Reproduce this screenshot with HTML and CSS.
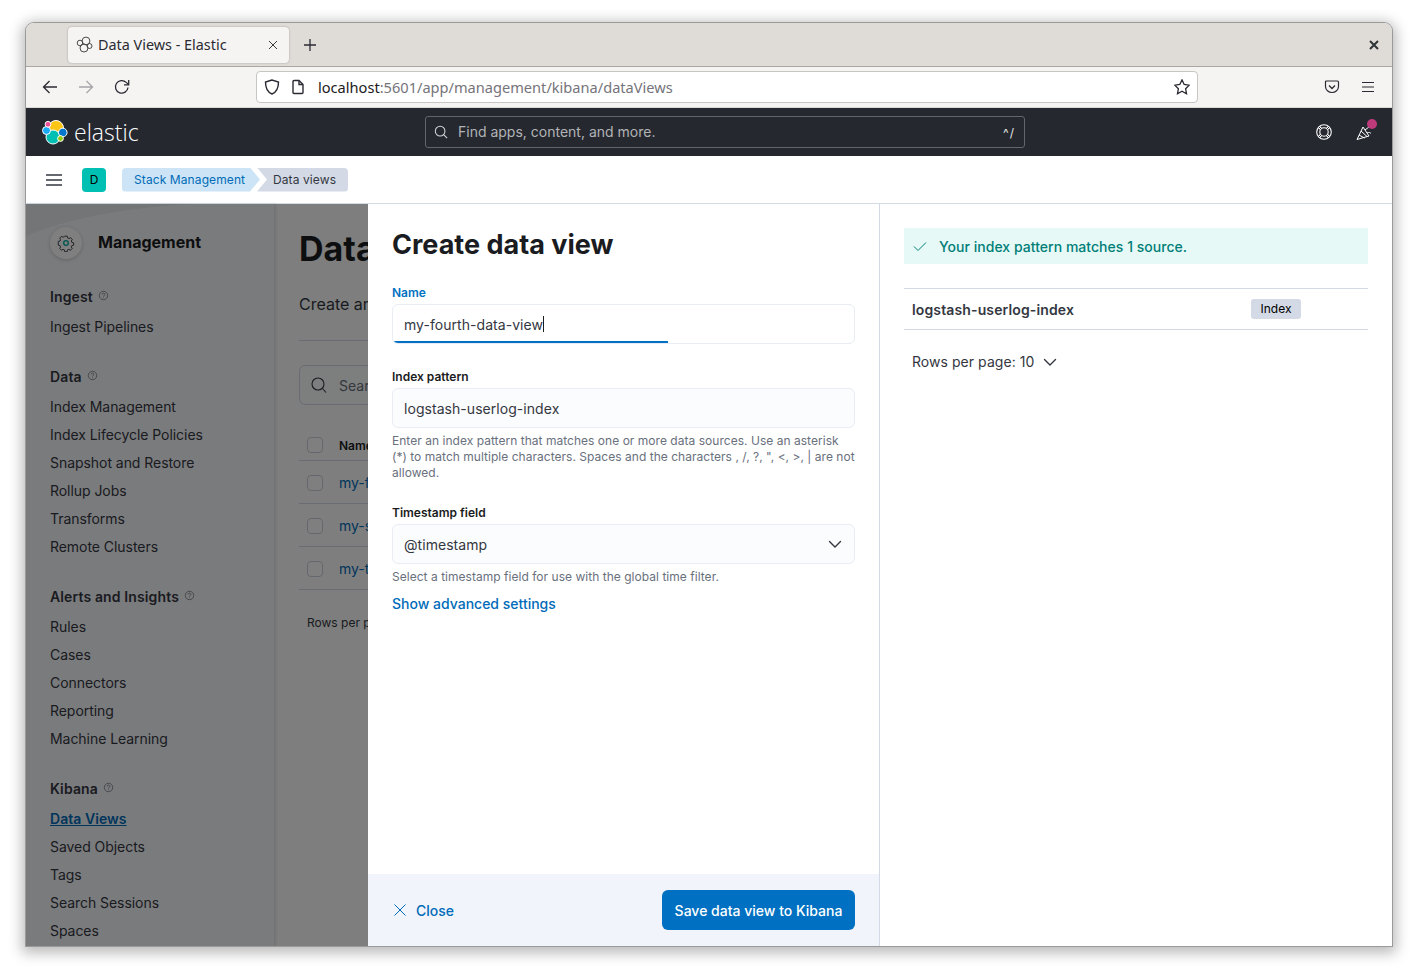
FILE: index.html
```html
<!DOCTYPE html>
<html lang="en">

<head>
    <meta charset="UTF-8">
    <meta name="viewport" content="width=device-width, initial-scale=1.0">
    <title>Data Views - Elastic</title>
    <link rel="stylesheet" href="styles.css">
</head>

<body>
    <svg class="defs" width="0" height="0">
        <symbol id="help" viewBox="0 0 12 12">
            <circle cx="6" cy="6" r="4.6" fill="none" stroke="currentColor" stroke-width=".8" />
            <path d="M4.5 4.9c0-2 3-2 3 0 0 1.100-1.500 1-1.500 2.200M6 8.100v.8" fill="none" stroke="currentColor" stroke-width=".8" />
        </symbol>
        <symbol id="chevron" viewBox="0 0 16 16">
            <path d="M2.500 5.500 8 11l5.500-5.500" fill="none" stroke="currentColor" stroke-width="1.400" stroke-linecap="round" />
        </symbol>
    </svg>

    <div class="window">
        <!-- browser -->
        <div class="tabbar">
            <div class="tab">
                <svg class="favicon" width="17" height="17" viewBox="0 0 17 17" fill="none" stroke="#4a4a4c" stroke-width="1">
                    <circle cx="10" cy="5" r="3.900" />
                    <circle cx="8" cy="12" r="4" />
                    <circle cx="4" cy="7" r="2.800" />
                    <circle cx="13.500" cy="10" r="2.500" />
                </svg>
                <span class="tab-title">Data Views - Elastic</span>
                <svg width="10" height="10" viewBox="0 0 10 10" stroke="#3a3a3c" stroke-width="1">
                    <path d="M1 1l8 8M9 1l-8 8" />
                </svg>
            </div>
            <svg class="newtab" width="14" height="14" viewBox="0 0 14 14" stroke="#2b2a33" stroke-width="1.300">
                <path d="M7 1v12M1 7h12" />
            </svg>
            <svg class="winclose" width="10" height="10" viewBox="0 0 10 10" stroke="#2e3436" stroke-width="2">
                <path d="M1 1l8 8M9 1l-8 8" />
            </svg>
        </div>

        <div class="toolbar">
            <svg class="nav-icon" width="16" height="16" viewBox="0 0 16 16" fill="none" stroke="#2b2a33" stroke-width="1.300">
                <path d="M15 8H1.500M7.500 2 1.500 8l6 6" />
            </svg>
            <svg class="nav-icon" width="16" height="16" viewBox="0 0 16 16" fill="none" stroke="#a5a4a8" stroke-width="1.300">
                <path d="M1 8h13.500M8.500 2l6 6-6 6" />
            </svg>
            <svg class="nav-icon" width="16" height="16" viewBox="0 0 16 16" fill="none" stroke="#2b2a33" stroke-width="1.300">
                <path d="M14 8.500A6.300 6.300 0 1 1 12.200 3.400L14.500 5.500" />
                <path d="M14.700 1v4.800H10" />
            </svg>
            <div class="urlbar">
                <svg width="16" height="16" viewBox="0 0 16 16" fill="none" stroke="#2b2a33" stroke-width="1.400">
                    <path d="M8 1 1.500 3c0 6.500 1.500 10 6.500 12 5-2 6.500-5.500 6.500-12z" />
                </svg>
                <svg class="page-icon" width="16" height="16" viewBox="0 0 16 16" fill="none" stroke="#2b2a33" stroke-width="1.400">
                    <path d="M3 2.500C3 1.800 3.500 1.500 4 1.500h5l4 4V13.500c0 .6-.5 1-1 1H4c-.5 0-1-.4-1-1z" />
                    <path d="M9 1.500v4h4" />
                </svg>
                <span class="url"><b>localhost</b>:5601/app/management/kibana/dataViews</span>
                <svg width="16" height="16" viewBox="0 0 16 16" fill="none" stroke="#2b2a33" stroke-width="1.300">
                    <path d="M8 .9l2.200 4.600 5 .7-3.600 3.500.9 5L8 12.300l-4.500 2.400.9-5L.8 6.200l5-.7z" />
                </svg>
            </div>
            <svg class="pocket" width="16" height="16" viewBox="0 0 16 16" fill="none" stroke="#2b2a33" stroke-width="1.200">
                <path d="M2.500 2h11c.7 0 1 .4 1 1v4.500c0 3.500-3 6-6.500 6s-6.500-2.500-6.500-6V3c0-.6.300-1 1-1z" />
                <path d="M5 6.500l3 3 3-3" stroke-width="1.300" />
            </svg>
            <svg class="burger" width="14" height="12" viewBox="0 0 14 12" stroke="#2b2a33" stroke-width="1.200">
                <path d="M1 1.500h12M1 6h12M1 10.500h12" />
            </svg>
        </div>

        <!-- kibana header -->
        <header class="kbn-top">
            <div class="brand">
                <svg width="26" height="26" viewBox="0 0 26 26">
                    <circle cx="14" cy="9" r="7.500" fill="#fec514" stroke="#fff" />
                    <circle cx="11" cy="18" r="7" fill="#00bfb3" stroke="#fff" />
                    <circle cx="4.500" cy="11.500" r="4" fill="#1ba9f5" stroke="#fff" />
                    <circle cx="20.800" cy="13.500" r="4.300" fill="#0077cc" stroke="#fff" />
                    <circle cx="6" cy="5.300" r="2.900" fill="#f04e98" stroke="#fff" />
                    <circle cx="18.500" cy="19.500" r="2.900" fill="#93c90e" stroke="#fff" />
                </svg>
                <span class="brand-name">elastic</span>
            </div>
            <div class="global-search">
                <svg width="14" height="14" viewBox="0 0 16 16" fill="none" stroke="#d6d7da" stroke-width="1.200">
                    <circle cx="7" cy="7" r="5.500" />
                    <path d="M11 11l4 4" />
                </svg>
                <span class="search-text">Find apps, content, and more.</span>
                <span class="shortcut">^/</span>
            </div>
            <div class="top-actions">
                <svg width="16" height="16" viewBox="0 0 16 16" fill="none" stroke="#fff" stroke-width="1.100">
                    <circle cx="8" cy="8" r="7.300" />
                    <circle cx="8" cy="8" r="4.200" />
                    <path d="M3 3l2 2M13 3l-2 2M3 13l2-2M13 13l-2-2" stroke-width="2.600" />
                    <path d="M3 3l2 2M13 3l-2 2M3 13l2-2M13 13l-2-2" stroke="#25282f" stroke-width="1" />
                </svg>
                <div class="cheer">
                    <svg width="18" height="18" viewBox="0 0 18 18" fill="none" stroke="#fff" stroke-width="1">
                        <path d="M1 16.500 7 4l6 9z" />
                        <path d="M3 12l5.500 3M5 8l6 5.500" />
                        <path d="M9 7l4-3M11 10c2-1 3-.5 4 .5" />
                    </svg>
                    <span class="dot"></span>
                </div>
            </div>
        </header>

        <div class="crumbbar">
            <svg class="menu" width="16" height="14" viewBox="0 0 16 14" stroke="#343741" stroke-width="1.700">
                <path d="M0 2h16M0 7h16M0 12h16" />
            </svg>
            <span class="space">D</span>
            <div class="crumbs">
                <span class="crumb crumb-first">Stack Management</span>
                <span class="crumb crumb-last">Data views</span>
            </div>
        </div>

        <div class="content">
            <aside class="sidenav">
                <svg class="wave" width="248" height="40" viewBox="0 0 248 40">
                    <path d="M0 32C40 16 90 4 170 0H0z" fill="#000" fill-opacity=".05" />
                </svg>
                <div class="side-head">
                    <span class="side-logo">
                        <svg width="18" height="18" viewBox="0 0 18 18" fill="none" stroke="#343741" stroke-width="1">
                            <path d="M7.600 1.500h2.800l.4 2 1.500.7 1.800-1 1.900 2-1.100 1.700.6 1.500 2 .5v2.600l-2 .5-.6 1.500 1 1.700-1.900 2-1.800-1-1.500.6-.4 2H7.600l-.4-2-1.500-.6-1.800 1-1.900-2 1-1.700-.6-1.500-2-.5V7.400l2-.5.6-1.500-1-1.700 1.900-2 1.800 1 1.500-.7z" transform="translate(.9 .8) scale(.9)" />
                            <circle cx="9" cy="9" r="2.300" stroke="#00a69b" stroke-width="1.300" />
                        </svg>
                    </span>
                    <span class="side-title">Management</span>
                </div>

                <div class="side-group">
                    <h3 class="side-h">Ingest <svg class="help"><use href="#help" /></svg></h3>
                    <a class="side-item">Ingest Pipelines</a>
                </div>
                <div class="side-group">
                    <h3 class="side-h">Data <svg class="help"><use href="#help" /></svg></h3>
                    <a class="side-item">Index Management</a>
                    <a class="side-item">Index Lifecycle Policies</a>
                    <a class="side-item">Snapshot and Restore</a>
                    <a class="side-item">Rollup Jobs</a>
                    <a class="side-item">Transforms</a>
                    <a class="side-item">Remote Clusters</a>
                </div>
                <div class="side-group">
                    <h3 class="side-h">Alerts and Insights <svg class="help"><use href="#help" /></svg></h3>
                    <a class="side-item">Rules</a>
                    <a class="side-item">Cases</a>
                    <a class="side-item">Connectors</a>
                    <a class="side-item">Reporting</a>
                    <a class="side-item">Machine Learning</a>
                </div>
                <div class="side-group">
                    <h3 class="side-h">Kibana <svg class="help"><use href="#help" /></svg></h3>
                    <a class="side-item side-active"><span>Data Views</span></a>
                    <a class="side-item">Saved Objects</a>
                    <a class="side-item">Tags</a>
                    <a class="side-item">Search Sessions</a>
                    <a class="side-item">Spaces</a>
                </div>
            </aside>

            <main class="page">
                <h1 class="page-title">Data</h1>
                <p class="page-sub">Create ar</p>
                <div class="page-rule"></div>
                <div class="page-search">
                    <svg width="16" height="16" viewBox="0 0 16 16" fill="none" stroke="#343741" stroke-width="1.100">
                        <circle cx="7" cy="7" r="6" />
                        <path d="M11.500 11.500 15 15.500" />
                    </svg>
                    <span>Sear</span>
                </div>
                <div class="t-row t-head"><span class="check"></span><b>Name</b></div>
                <div class="t-row"><span class="check"></span><a>my-f</a></div>
                <div class="t-row"><span class="check"></span><a>my-s</a></div>
                <div class="t-row"><span class="check"></span><a>my-t</a></div>
                <div class="page-rows">Rows per p</div>
            </main>

            <div class="overlay"></div>

            <section class="flyout">
                <div class="fly-left">
                    <div class="fly-body">
                        <h2 class="fly-title">Create data view</h2>

                        <label class="f-label f-label-on">Name</label>
                        <div class="f-input f-input-on">my-fourth-data-view<span class="caret"></span></div>

                        <label class="f-label f-gap">Index pattern</label>
                        <div class="f-input">logstash-userlog-index</div>
                        <p class="f-help">Enter an index pattern that matches one or more data sources. Use an asterisk (*) to match multiple characters. Spaces and the characters , /, ?, ", &lt;, &gt;, | are not allowed.</p>

                        <label class="f-label f-gap2">Timestamp field</label>
                        <div class="f-input f-select">@timestamp
                            <svg width="16" height="16" class="f-chev"><use href="#chevron" /></svg>
                        </div>
                        <p class="f-help">Select a timestamp field for use with the global time filter.</p>
                        <a class="f-link">Show advanced settings</a>
                    </div>
                    <footer class="fly-foot">
                        <a class="close-btn">
                            <svg width="12" height="12" viewBox="0 0 12 12" stroke="#006bb8" stroke-width="1">
                                <path d="M.5.500l11 11M11.500.500l-11 11" />
                            </svg>
                            Close
                        </a>
                        <button class="save-btn">Save data view to Kibana</button>
                    </footer>
                </div>

                <div class="fly-right">
                    <div class="callout">
                        <svg width="14" height="14" viewBox="0 0 14 14" fill="none" stroke="#017d73" stroke-width="1">
                            <path d="M1 7.500 5 11.500 13 3.500" />
                        </svg>
                        Your index pattern matches 1 source.
                    </div>
                    <div class="src-row">
                        <span class="src-name">logstash-userlog-index</span>
                        <span class="badge">Index</span>
                    </div>
                    <div class="rows-per">Rows per page: 10
                        <svg width="16" height="16"><use href="#chevron" /></svg>
                    </div>
                </div>
            </section>
        </div>
    </div>
</body>

</html>
```

FILE: styles.css
```css
* {
    margin: 0;
    padding: 0;
    box-sizing: border-box;
}
html, body {
    height: 975px;
    overflow: hidden;
}
body {
    background: #fff;
    padding: 23px 26px 0;
    font-family: Inter, "Liberation Sans", sans-serif;
    font-size: 14px;
    color: #343741;
}
.defs {
    position: absolute;
}
svg {
    display: block;
    flex: none;
}
.window {
    width: 1366px;
    height: 923px;
    border-radius: 8px 8px 0 0;
    overflow: hidden;
    display: flex;
    flex-direction: column;
    box-shadow: 0 0 0 1px #9a9a9a, 0 3px 14px 4px rgba(0, 0, 0, .28);
}

/* browser chrome */
.tabbar {
    height: 44px;
    flex: none;
    display: flex;
    align-items: center;
    background: #dfdcd8;
    border-bottom: 1px solid #a9a7a4;
    padding-left: 42px;
    padding-right: 13px;
}
.tab {
    width: 221px;
    height: 36px;
    background: #f5f4f2;
    border-radius: 4px;
    box-shadow: 0 0 2px rgba(0, 0, 0, .3);
    display: flex;
    align-items: center;
    padding: 0 11px 0 8px;
    font-family: "Noto Sans", sans-serif;
    font-size: 14.4px;
    color: #2b2a33;
}
.tab-title {
    flex: 1;
    margin-left: 5px;
}
.newtab {
    margin-left: 14px;
}
.winclose {
    margin-left: auto;
}
.toolbar {
    height: 41px;
    flex: none;
    display: flex;
    align-items: center;
    background: #f5f4f2;
    border-bottom: 1px solid #dcdad6;
    padding-left: 16px;
    font-family: "Noto Sans", sans-serif;
}
.nav-icon {
    margin-right: 20px;
}
.urlbar {
    width: 942px;
    height: 32px;
    margin-left: 106px;
    background: #fff;
    border: 1px solid #c8c6c2;
    border-radius: 4px;
    display: flex;
    align-items: center;
    padding: 0 7px 0 7px;
}
.page-icon {
    margin-left: 10px;
}
.url {
    flex: 1;
    margin-left: 12px;
    font-size: 14.6px;
    color: #75747a;
}
.url b {
    font-weight: 400;
    color: #1b1b20;
}
.pocket {
    margin-left: 126px;
}
.burger {
    margin-left: 21px;
}

/* kibana header */
.kbn-top {
    height: 48px;
    flex: none;
    display: flex;
    align-items: center;
    background: #25282f;
    padding: 0 18px 0 16px;
    position: relative;
}
.brand {
    width: 383px;
    display: flex;
    align-items: center;
    gap: 6px;
}
.brand-name {
    color: #fff;
    font-family: "Open Sans", sans-serif;
    font-size: 23px;
    font-weight: 300;
    line-height: 26px;
    margin-top: -1px;
}
.global-search {
    width: 600px;
    height: 32px;
    border: 1px solid #62656b;
    border-radius: 3px;
    display: flex;
    align-items: center;
    padding: 0 9px 0 8px;
    color: #b2b3b6;
}
.search-text {
    flex: 1;
    margin: -2px 0 0 10px;
}
.shortcut {
    font-size: 12px;
    color: #e3e4e6;
    letter-spacing: 1px;
}
.top-actions {
    margin-left: auto;
    display: flex;
    align-items: center;
    gap: 24px;
}
.cheer {
    position: relative;
}
.dot {
    position: absolute;
    top: -4px;
    right: -3px;
    width: 10px;
    height: 10px;
    border-radius: 50%;
    background: #bd3a7b;
}

/* breadcrumbs */
.crumbbar {
    height: 48px;
    flex: none;
    display: flex;
    align-items: center;
    background: #fff;
    border-bottom: 1px solid #d3dae6;
    padding-left: 20px;
}
.space {
    width: 24px;
    height: 24px;
    margin-left: 20px;
    border-radius: 4px;
    background: #00bfb3;
    color: #000;
    font-size: 12px;
    text-align: center;
    line-height: 24px;
}
.crumbs {
    display: flex;
    margin-left: 16px;
    font-size: 12px;
    line-height: 24px;
}
.crumb {
    height: 24px;
    white-space: nowrap;
}
.crumb-first {
    width: 138px;
    padding-left: 12px;
    background: #cce4f5;
    color: #006bb8;
    border-radius: 4px 0 0 4px;
    clip-path: polygon(0 0, 128px 0, 138px 50%, 128px 100%, 0 100%);
    letter-spacing: .1px;
}
.crumb-last {
    width: 91px;
    margin-left: -3px;
    padding-left: 16px;
    background: #d3dae6;
    color: #343741;
    border-radius: 0 4px 4px 0;
    clip-path: polygon(0 0, 100% 0, 100% 100%, 0 100%, 10px 50%);
    letter-spacing: .1px;
}

/* page under the flyout */
.content {
    flex: 1;
    min-height: 0;
    display: flex;
    position: relative;
    background: #fdfdfd;
}
.sidenav {
    width: 249px;
    flex: none;
    padding: 23px 0 0 24px;
    background: #f5f7fa;
    border-right: 1px solid #e6e9ee;
    box-shadow: 1px 0 3px rgba(0, 0, 0, .1);
    position: relative;
}
.wave {
    position: absolute;
    top: 0;
    left: 0;
}
.side-head {
    display: flex;
    align-items: center;
    gap: 16px;
    height: 32px;
    margin-bottom: 21px;
    position: relative;
}
.side-logo {
    width: 32px;
    height: 32px;
    border-radius: 50%;
    background: #fff;
    box-shadow: 0 1px 4px rgba(0, 0, 0, .2);
    display: flex;
    align-items: center;
    justify-content: center;
}
.side-title {
    font-size: 16px;
    font-weight: 700;
    color: #1a1c21;
    margin-bottom: 2px;
}
.side-group {
    margin-bottom: 19px;
}
.side-h {
    height: 33px;
    padding-bottom: 1px;
    display: flex;
    align-items: center;
    gap: 5px;
    font-size: 14px;
    font-weight: 600;
    color: #343741;
    letter-spacing: .13px;
}
.help {
    width: 11px;
    height: 11px;
    color: #69707d;
    margin-top: -2px;
}
.side-item {
    display: block;
    height: 28px;
    line-height: 28px;
    color: #343741;
    letter-spacing: -.05px;
}
.side-active {
    color: #006bb8;
    font-weight: 600;
    letter-spacing: .05px;
}
.side-active span {
    text-decoration: underline;
}
.page {
    flex: 1;
    padding: 24px 24px 0;
}
.page-title {
    font-size: 34px;
    line-height: 42px;
    font-weight: 700;
    color: #1a1c21;
    white-space: nowrap;
}
.page-sub {
    margin-top: 22px;
    font-size: 16px;
    line-height: 24px;
    white-space: nowrap;
}
.page-rule {
    margin-top: 24px;
    height: 1px;
    background: #d3dae6;
}
.page-search {
    margin-top: 24px;
    height: 40px;
    border: 1px solid #d3dae6;
    border-radius: 6px;
    background: #fbfcfd;
    display: flex;
    align-items: center;
    padding-left: 11px;
    gap: 12px;
    color: #69707d;
}
.t-row {
    height: 43px;
    padding-top: 1px;
    border-bottom: 1px solid #d3dae6;
    display: flex;
    align-items: center;
    padding-left: 8px;
    gap: 16px;
    white-space: nowrap;
}
.t-row a {
    color: #006bb8;
}
.t-head {
    height: 39px;
    margin-top: 17px;
    padding-top: 8px;
    font-size: 12px;
    color: #1a1c21;
}
.t-head b {
    font-weight: 600;
}
.check {
    width: 16px;
    height: 16px;
    border: 1px solid #c9cfd8;
    border-radius: 4px;
    background: #fff;
}
.page-rows {
    margin: 25px 0 0 8px;
    font-size: 12px;
    white-space: nowrap;
}
.overlay {
    position: absolute;
    inset: 0;
    background: rgba(0, 0, 0, .5);
}

/* flyout */
.flyout {
    position: absolute;
    top: 0;
    right: 0;
    bottom: 0;
    width: 1024px;
    display: flex;
    background: #fff;
}
.fly-left {
    width: 512px;
    flex: none;
    display: flex;
    flex-direction: column;
    border-right: 1px solid #d3dae6;
}
.fly-body {
    flex: 1;
    padding: 24px 24px 0;
}
.fly-title {
    font-size: 27px;
    line-height: 34px;
    font-weight: 700;
    color: #1a1c21;
    margin-bottom: 22px;
}
.f-label {
    display: block;
    font-size: 12px;
    line-height: 18px;
    font-weight: 600;
    color: #1a1c21;
    margin-bottom: 2px;
}
.f-label-on {
    color: #0071c2;
}
.f-gap {
    margin-top: 24px;
}
.f-gap2 {
    margin-top: 23px;
}
.f-input {
    height: 40px;
    border: 1px solid #e9ecf4;
    border-radius: 6px;
    background-color: #fbfcfd;
    display: flex;
    align-items: center;
    padding: 0 11px;
    color: #343741;
    letter-spacing: .05px;
}
.f-input-on {
    background: #fff linear-gradient(#0071c2, #0071c2) no-repeat left bottom / 275px 2px;
}
.caret {
    width: 1px;
    height: 16px;
    background: #1a1c21;
}
.f-select {
    justify-content: space-between;
    padding-right: 11px;
}
.f-chev {
    width: 16px;
    height: 16px;
    color: #343741;
}
.f-help {
    margin-top: 5px;
    font-size: 12px;
    line-height: 16px;
    color: #69707d;
    letter-spacing: .03px;
}
.f-link {
    display: block;
    margin-top: 9px;
    line-height: 20px;
    font-weight: 500;
    color: #006bb8;
}
.fly-foot {
    height: 72px;
    flex: none;
    display: flex;
    align-items: center;
    justify-content: space-between;
    padding: 0 24px;
    background: #f1f4fa;
}
.close-btn {
    display: flex;
    align-items: center;
    gap: 10px;
    margin-left: 2px;
    color: #006bb8;
    font-weight: 500;
}
.save-btn {
    width: 193px;
    height: 40px;
    border: 0;
    border-radius: 6px;
    background: #0071c2;
    color: #fff;
    font: 500 14px Inter, "Liberation Sans", sans-serif;
}
.fly-right {
    flex: 1;
    padding: 24px 24px 0;
}
.callout {
    height: 36px;
    display: flex;
    align-items: center;
    gap: 12px;
    padding-left: 9px;
    background: #e6f9f7;
    color: #007e77;
    font-weight: 500;
    letter-spacing: .03px;
}
.src-row {
    margin-top: 24px;
    height: 42px;
    border-top: 1px solid #d3dae6;
    border-bottom: 1px solid #d3dae6;
    display: flex;
    align-items: center;
    padding-left: 8px;
}
.src-name {
    width: 339px;
    font-weight: 600;
    letter-spacing: .13px;
}
.badge {
    width: 50px;
    height: 20px;
    border-radius: 3px;
    background: #d3dae6;
    color: #000;
    font-size: 12px;
    line-height: 20px;
    text-align: center;
}
.rows-per {
    display: flex;
    align-items: center;
    gap: 8px;
    margin-top: 22px;
    padding-left: 8px;
    line-height: 20px;
    letter-spacing: .05px;
}
```
